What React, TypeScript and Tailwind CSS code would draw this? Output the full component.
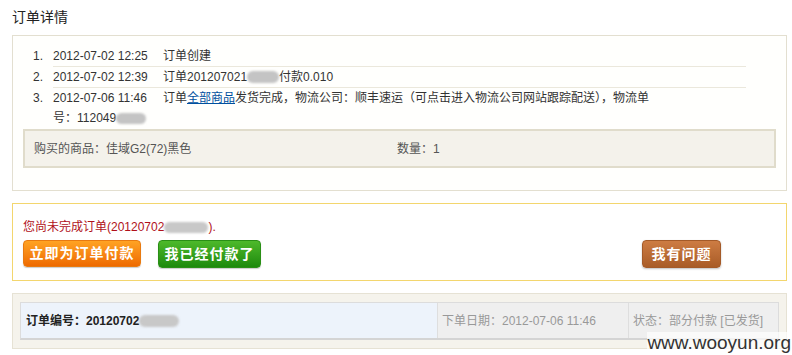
export default function App() {
  const font = { fontFamily: '"Liberation Sans", Arial, "Noto Sans CJK SC", sans-serif' }

  return (
    <div className="relative w-[792px] h-[355px] bg-white overflow-hidden text-[12px] text-[#333]" style={font}>
      <div className="pt-[9px] pl-[12px] text-[14px] leading-[17px] text-[#222]">订单详情</div>

      {/* order log */}
      <div className="mt-[9px] ml-[12px] w-[775px] h-[156px] border border-[#e3dfd0] bg-[#fffffd] pt-[10px]">
        <ol className="text-[12px] text-[#333]">
          <li className="flex">
            <span className="w-[36px] text-right pr-[6px] leading-[20px]">1.</span>
            <div className="ml-[4px] w-[693px] border-b border-[#ebe8dc] leading-[20px]">
              <span className="inline-block w-[110px]">2012-07-02 12:25</span>订单创建
            </div>
          </li>
          <li className="flex">
            <span className="w-[36px] text-right pr-[6px] leading-[20px]">2.</span>
            <div className="ml-[4px] w-[693px] border-b border-[#ebe8dc] leading-[20px] flex items-center">
              <span className="inline-block w-[110px]">2012-07-02 12:39</span>
              <span>订单201207021</span>
              <span className="inline-block w-[32px] h-[12px] rounded-full bg-[#c4c4c4] blur-[1px]" />
              <span>付款0.010</span>
            </div>
          </li>
          <li className="flex">
            <span className="w-[36px] text-right pr-[6px] leading-[20px]">3.</span>
            <div className="ml-[4px] w-[693px] leading-[20px]">
              <span className="inline-block w-[110px]">2012-07-06 11:46</span>订单
              <a className="text-[#00509f] underline">全部商品</a>发货完成，物流公司：顺丰速运（可点击进入物流公司网站跟踪配送），物流单
              <br />
              号：112049
              <span className="inline-block align-middle w-[30px] h-[11px] rounded-full bg-[#c4c4c4] blur-[1px]" />
            </div>
          </li>
        </ol>

        <div className="mt-[1px] ml-[10px] w-[753px] h-[39px] border-2 border-[#e0dccb] bg-[#f4f2eb] flex items-center text-[#555]">
          <span className="pl-[9px] w-[372px]">购买的商品：佳域G2(72)黑色</span>
          <span>数量：1</span>
        </div>
      </div>

      {/* pay notice */}
      <div className="mt-[12px] ml-[12px] w-[775px] h-[78px] border border-[#f3d66e] bg-white pt-[15px] pl-[10px]">
        <div className="flex items-center leading-[16px] text-[#b0101a]">
          <span>您尚未完成订单(20120702</span>
          <span className="inline-block w-[44px] h-[11px] rounded-full bg-[#c8c8c8] blur-[1px]" />
          <span>).</span>
        </div>
        <div className="flex mt-[5px]">
          <button className="w-[118px] h-[27px] rounded-[4px] bg-gradient-to-b from-[#ffa323] to-[#ee6a00] border border-[#e87a10] text-white font-bold text-[14px] tracking-[1px] shadow-[0_1px_1px_rgba(0,0,0,0.2)]">
            立即为订单付款
          </button>
          <button className="ml-[17px] w-[103px] h-[28px] rounded-[4px] bg-gradient-to-b from-[#4db92b] to-[#1c8a0c] border border-[#2a8f16] text-white font-bold text-[14px] tracking-[1px] shadow-[0_1px_1px_rgba(0,0,0,0.2)]">
            我已经付款了
          </button>
          <button className="ml-[381px] w-[79px] h-[28px] rounded-[4px] bg-gradient-to-b from-[#cd7c43] to-[#a95c27] border border-[#a45a28] text-white font-bold text-[14px] tracking-[1px] shadow-[0_1px_2px_rgba(0,0,0,0.25)]">
            我有问题
          </button>
        </div>
      </div>

      {/* order summary */}
      <div className="mt-[12px] ml-[12px] w-[775px] h-[56px] border border-[#e6e2d4] bg-[#f5f3ec] pt-[8px] px-[7px]">
        <div className="flex h-[38px] border border-[#dcdcdc] border-b-2 border-b-[#d4d4d4]">
          <div className="w-[416px] bg-[#edf3fb] flex items-center pl-[5px] font-bold text-[#222]">
            <span>订单编号：20120702</span>
            <span className="inline-block w-[40px] h-[12px] rounded-full bg-[#c8c8c8] blur-[1px]" />
          </div>
          <div className="w-[191px] bg-[#efefef] border-l border-[#dedede] flex items-center pl-[4px] text-[#999]">
            下单日期：2012-07-06 11:46
          </div>
          <div className="flex-1 bg-[#efefef] border-l border-[#dedede] flex items-center pl-[4px] text-[#999]">
            状态：部分付款 [已发货]
          </div>
        </div>
      </div>

      <div className="absolute right-[1px] bottom-[2px] text-[19px] leading-[21px] text-[#333] bg-white/70" style={{ fontFamily: '"Liberation Sans", Arial, sans-serif' }}>
        www.wooyun.org
      </div>
    </div>
  )
}
